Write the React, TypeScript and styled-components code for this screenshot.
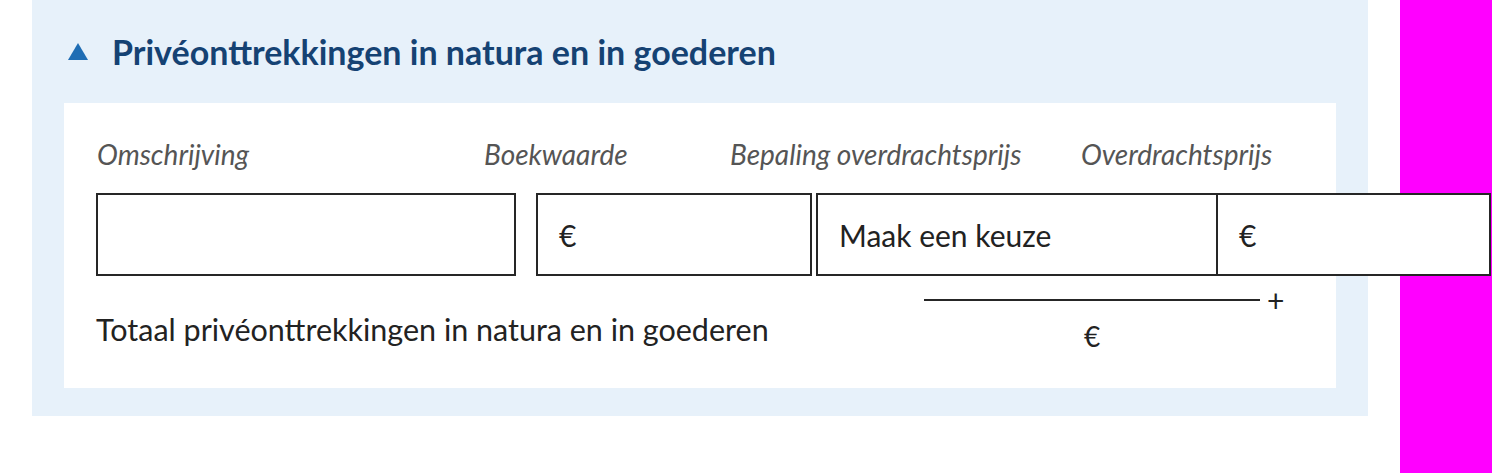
import React from 'react';
import styled, { createGlobalStyle } from 'styled-components';

const GlobalStyle = createGlobalStyle`
  html, body {
    margin: 0;
    padding: 0;
    background: #fff;
  }
  body {
    font-family: Lato, "Noto Sans", sans-serif;
    color: #222;
  }
`;

const Page = styled.div`
  display: flex;
  width: 1492px;
  height: 473px;
  overflow: hidden;
`;

const Main = styled.main`
  width: 1400px;
  flex-shrink: 0;
  padding: 0 32px;
  box-sizing: border-box;
`;

const Sidebar = styled.aside`
  width: 92px;
  flex-shrink: 0;
  background: #ff00ff;
`;

const Panel = styled.section`
  background: #e7f1fa;
  height: 416px;
  padding: 0 32px 28px;
  box-sizing: border-box;
  display: flex;
  flex-direction: column;
`;

const Header = styled.button`
  display: flex;
  align-items: center;
  gap: 24px;
  height: 103px;
  padding: 0 0 0 4px;
  border: 0;
  background: transparent;
  cursor: pointer;
  font-family: inherit;
  text-align: left;
`;

const Caret = styled.span`
  width: 0;
  height: 0;
  border-left: 10px solid transparent;
  border-right: 10px solid transparent;
  border-bottom: 17px solid #1f6db4;
`;

const Title = styled.h2`
  margin: 0;
  font-size: 34px;
  font-weight: 700;
  color: #154273;
`;

const Card = styled.div`
  background: #fff;
  flex: 1;
  padding: 0 32px;
`;

const LabelRow = styled.div`
  display: grid;
  grid-template-columns: 387px 246px 351px 1fr;
  height: 90px;
  align-items: center;
  padding-top: 12px;
  box-sizing: border-box;
`;

const ColLabel = styled.span`
  font-style: italic;
  font-size: 28px;
  color: #555;
  padding-left: 1px;
  white-space: nowrap;
`;

const InputRow = styled.div`
  display: flex;
  position: relative;
  z-index: 1;
`;

const Field = styled.div<{ $w: number; $gap?: number }>`
  flex-shrink: 0;
  width: ${(p) => p.$w}px;
  height: 83px;
  margin-left: ${(p) => p.$gap ?? 0}px;
  border: 2px solid #262626;
  box-sizing: border-box;
  background: #fff;
  display: flex;
  align-items: center;
  padding-left: 21px;
  font-size: 30px;
  color: #222;
`;

const TotalRow = styled.div`
  display: grid;
  grid-template-columns: 828px 1fr;
  padding-top: 9px;
`;

const TotalLabel = styled.span`
  font-size: 30.5px;
  color: #222;
  align-self: end;
  padding-bottom: 6px;
  white-space: nowrap;
`;

const Sum = styled.div`
  display: flex;
  flex-direction: column;
  width: 370px;
`;

const SumLine = styled.div`
  display: flex;
  align-items: center;
  gap: 7px;
  font-size: 30px;
  line-height: 1;
  color: #222;
`;

const Rule = styled.span`
  width: 336px;
  height: 2px;
  background: #262626;
`;

const SumValue = styled.span`
  width: 336px;
  text-align: center;
  font-size: 28px;
  margin-top: 4px;
`;

export default function App() {
  return (
    <>
      <GlobalStyle />
      <Page>
        <Main>
          <Panel>
            <Header type="button">
              <Caret />
              <Title>Privéonttrekkingen in natura en in goederen</Title>
            </Header>
            <Card>
              <LabelRow>
                <ColLabel>Omschrijving</ColLabel>
                <ColLabel>Boekwaarde</ColLabel>
                <ColLabel>Bepaling overdrachtsprijs</ColLabel>
                <ColLabel>Overdrachtsprijs</ColLabel>
              </LabelRow>
              <InputRow>
                <Field $w={420} />
                <Field $w={276} $gap={20}>€</Field>
                <Field $w={402} $gap={4}>Maak een keuze</Field>
                <Field $w={275} $gap={-2}>€</Field>
              </InputRow>
              <TotalRow>
                <TotalLabel>Totaal privéonttrekkingen in natura en in goederen</TotalLabel>
                <Sum>
                  <SumLine>
                    <Rule />
                    <span>+</span>
                  </SumLine>
                  <SumValue>€</SumValue>
                </Sum>
              </TotalRow>
            </Card>
          </Panel>
        </Main>
        <Sidebar />
      </Page>
    </>
  );
}
